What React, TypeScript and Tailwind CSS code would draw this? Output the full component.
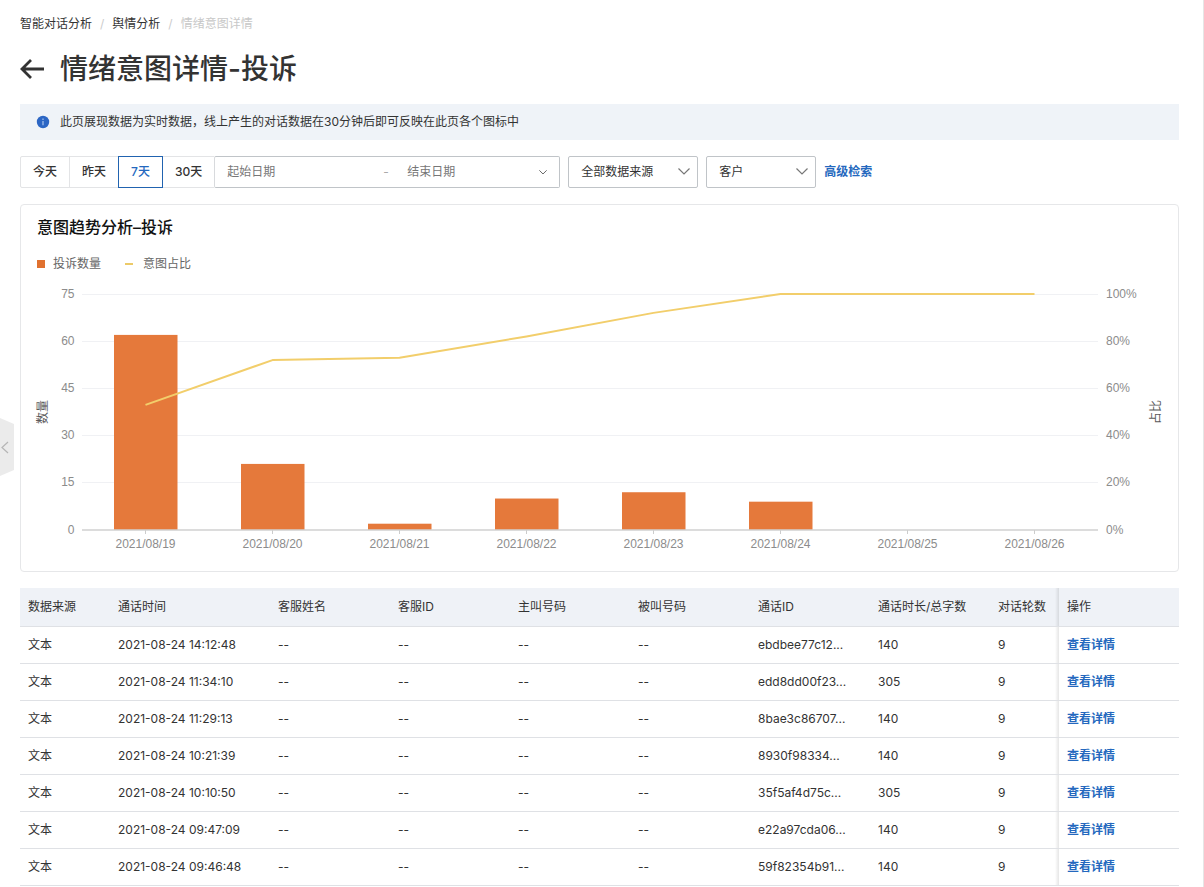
import React from "react";

const sans = "font-[Inter,'Noto_Sans_CJK_SC',sans-serif]";

const days = [
  { date: "2021/08/19", count: 62, ratio: 53 },
  { date: "2021/08/20", count: 21, ratio: 72 },
  { date: "2021/08/21", count: 2, ratio: 73 },
  { date: "2021/08/22", count: 10, ratio: 82 },
  { date: "2021/08/23", count: 12, ratio: 92 },
  { date: "2021/08/24", count: 9, ratio: 100 },
  { date: "2021/08/25", count: 0, ratio: 100 },
  { date: "2021/08/26", count: 0, ratio: 100 },
];

const calls = [
  { time: "2021-08-24 14:12:48", id: "ebdbee77c12...", size: 140 },
  { time: "2021-08-24 11:34:10", id: "edd8dd00f23...", size: 305 },
  { time: "2021-08-24 11:29:13", id: "8bae3c86707...", size: 140 },
  { time: "2021-08-24 10:21:39", id: "8930f98334...", size: 140 },
  { time: "2021-08-24 10:10:50", id: "35f5af4d75c...", size: 305 },
  { time: "2021-08-24 09:47:09", id: "e22a97cda06...", size: 140 },
  { time: "2021-08-24 09:46:48", id: "59f82354b91...", size: 140 },
];

const plot = { left: 45, right: 1061, top: 21, bottom: 257, step: 127, bar: 63.5 };
const plotHeight = plot.bottom - plot.top;

function TrendChart() {
  const center = (i: number) => plot.left + plot.step * (i + 0.5);
  const points = days
    .map((d, i) => `${center(i)},${plot.bottom - (d.ratio / 100) * plotHeight}`)
    .join(" ");
  return (
    <svg
      viewBox="0 0 1125 282"
      className="block w-full overflow-visible font-['Liberation_Sans','Noto_Sans_CJK_SC',sans-serif] text-[12px]"
      role="img"
      aria-label="意图趋势分析"
    >
      {[0, 1, 2, 3, 4, 5].map((n) => {
        const y = Math.floor(plot.bottom - (n * plotHeight) / 5);
        return (
          <g key={n}>
            {n > 0 && (
              <line x1={plot.left} x2={plot.right} y1={y + 0.5} y2={y + 0.5} stroke="#f0f1f4" />
            )}
            <text x="37.5" y={y + 4} textAnchor="end" fill="#8c8c8c">
              {n * 15}
            </text>
            <text x="1069" y={y + 4} fill="#8c8c8c">
              {n * 20}%
            </text>
          </g>
        );
      })}
      {days.map((d, i) => {
        const h = (d.count / 75) * plotHeight;
        return (
          <g key={d.date}>
            <rect
              x={center(i) - plot.bar / 2 + 0.25}
              y={plot.bottom - h}
              width={plot.bar}
              height={h}
              fill="#e5793b"
            />
            <line x1={center(i)} x2={center(i)} y1="257" y2="261" stroke="#cccccc" />
            <text x={center(i)} y="275" textAnchor="middle" fill="#8c8c8c">
              {d.date}
            </text>
          </g>
        );
      })}
      <line x1={plot.left} x2={plot.right} y1="257" y2="257" stroke="#d0d0d0" strokeWidth="1.5" />
      <polyline points={points} fill="none" stroke="#f2ce6b" strokeWidth="2" strokeLinejoin="round" />
      <text transform="translate(10 139) rotate(-90)" textAnchor="middle" fill="#595959">
        数量
      </text>
      <text transform="translate(1123 139) rotate(-90)" textAnchor="middle" fill="#595959">
        占比
      </text>
    </svg>
  );
}

function Chevron({ className }: { className: string }) {
  return (
    <svg viewBox="0 0 12 7" className={className} fill="none" stroke="currentColor" aria-hidden="true">
      <path d="M0.5 0.5 6 6 11.5 0.5" strokeWidth="1.2" />
    </svg>
  );
}

function Select({ label, value, width }: { label: string; value: string; width: string }) {
  return (
    <div className={`relative ${width}`}>
      <select
        aria-label={label}
        className="h-8 w-full appearance-none rounded-xs border border-[#c0c4c8] bg-white pr-8 pl-3 text-[12px] text-[#333]"
      >
        <option>{value}</option>
      </select>
      <Chevron className="pointer-events-none absolute top-3 right-2 w-3 text-[#777]" />
    </div>
  );
}

const ranges = ["今天", "昨天", "7天", "30天"];
const headings = [
  { text: "数据来源", width: "w-[90px]" },
  { text: "通话时间", width: "w-[160px]" },
  { text: "客服姓名", width: "w-[120px]" },
  { text: "客服ID", width: "w-[120px]" },
  { text: "主叫号码", width: "w-[120px]" },
  { text: "被叫号码", width: "w-[120px]" },
  { text: "通话ID", width: "w-[120px]" },
  { text: "通话时长/总字数", width: "w-[120px]" },
  { text: "对话轮数", width: "w-auto" },
];
const actionCell =
  "relative pl-2 before:absolute before:inset-y-0 before:-left-1 before:w-1 before:bg-linear-to-r before:from-transparent before:to-black/10";

export default function App() {
  return (
    <div
      className={`relative min-h-screen border-r border-[#e6e6e6] bg-white pr-6 pl-5 text-[12px] leading-[18px] text-[#333] ${sans}`}
    >
      <button aria-label="收起" className="absolute top-[418px] left-0">
        <svg viewBox="0 0 14 58" className="block w-3.5">
          <path d="M0 0 14 6V52L0 58Z" fill="#ebebeb" />
          <path d="M8 24 2 29.500 8 35" fill="none" stroke="#b5b5b5" strokeWidth="1.2" />
        </svg>
      </button>

      <nav aria-label="面包屑" className="flex gap-2 pt-3.5 leading-5">
        <a href="#">智能对话分析</a>
        <span className="text-[#ccc]">/</span>
        <a href="#">舆情分析</a>
        <span className="text-[#ccc]">/</span>
        <span className="text-[#c8c8c8]">情绪意图详情</span>
      </nav>

      <header className="mt-[15px] flex h-10 items-center gap-4">
        <a href="#" aria-label="返回">
          <svg viewBox="0 0 24 20" className="w-6" fill="none" stroke="#333" strokeWidth="2.8">
            <path d="M24 10H2M11 1 2 10 11 19" />
          </svg>
        </a>
        <h1 className="text-[28px] leading-10 font-medium">情绪意图详情-投诉</h1>
      </header>

      <div className="mt-[15px] flex h-9 items-center gap-2.5 bg-[#eff3f8] px-4">
        <svg viewBox="0 0 14 14" className="w-3.5" aria-hidden="true">
          <circle cx="7" cy="7" r="6.200" fill="#2c66c4" />
          <path d="M7 6V10.300M7 3.600V4.900" stroke="#a9c4ee" strokeWidth="1.2" />
        </svg>
        <p>此页展现数据为实时数据，线上产生的对话数据在30分钟后即可反映在此页各个图标中</p>
      </div>

      <div className="mt-4 flex items-center gap-2">
        <div className="flex">
          {ranges.map((r) => (
            <button
              key={r}
              className={
                r === "7天"
                  ? "relative -ml-px h-8 border border-[#2163b0] px-3 font-medium text-[#2468be]"
                  : "-ml-px h-8 border border-[#e3e4e6] px-3 font-medium first:ml-0 first:rounded-l-xs last-of-type:border-r-0"
              }
            >
              {r}
            </button>
          ))}
          <div className="flex h-8 w-[346px] items-center rounded-xs border border-[#c0c4c8] border-l-[#d8dadd] px-3">
            <input
              aria-label="起始日期"
              placeholder="起始日期"
              className="w-[156px] placeholder:text-[#777]"
            />
            <span className="w-6 text-[#aaa]">-</span>
            <input
              aria-label="结束日期"
              placeholder="结束日期"
              className="min-w-0 flex-1 placeholder:text-[#777]"
            />
            <Chevron className="w-2 text-[#444]" />
          </div>
        </div>
        <Select label="数据来源" value="全部数据来源" width="w-[130px]" />
        <Select label="角色" value="客户" width="w-[110px]" />
        <a href="#" className="font-bold text-[#2468be]">
          高级检索
        </a>
      </div>

      <section className="mt-4 rounded-sm border border-[#e6e7e9] px-4 pt-2.5 pb-4">
        <h2 className="text-[16px] leading-6 font-medium text-[#111]">意图趋势分析–投诉</h2>
        <div className="mt-4 flex gap-6 text-[#666]">
          <span className="flex items-center gap-2">
            <i className="size-2 bg-[#e0712f]" />
            投诉数量
          </span>
          <span className="flex items-center gap-2.5">
            <i className="h-0.5 w-2 bg-[#ecca68]" />
            意图占比
          </span>
        </div>
        <TrendChart />
      </section>

      <table className="mt-4 w-full table-fixed border-collapse text-left">
        <thead>
          <tr className="h-[38px] border-b border-[#dfe1e5] bg-[#eff2f7]">
            {headings.map((h) => (
              <th key={h.text} className={`pl-2 font-normal whitespace-nowrap ${h.width}`}>
                {h.text}
              </th>
            ))}
            <th className={`w-[120px] font-normal ${actionCell}`}>操作</th>
          </tr>
        </thead>
        <tbody>
          {calls.map((c) => (
            <tr key={c.time} className="h-[37px] border-b border-[#dfe1e5]">
              <td className="pl-2">文本</td>
              <td className="pl-2">{c.time}</td>
              <td className="pl-2">--</td>
              <td className="pl-2">--</td>
              <td className="pl-2">--</td>
              <td className="pl-2">--</td>
              <td className="pl-2">{c.id}</td>
              <td className="pl-2">{c.size}</td>
              <td className="pl-2">9</td>
              <td className={actionCell}>
                <a href="#" className="font-bold text-[#2468be]">
                  查看详情
                </a>
              </td>
            </tr>
          ))}
        </tbody>
      </table>
    </div>
  );
}
